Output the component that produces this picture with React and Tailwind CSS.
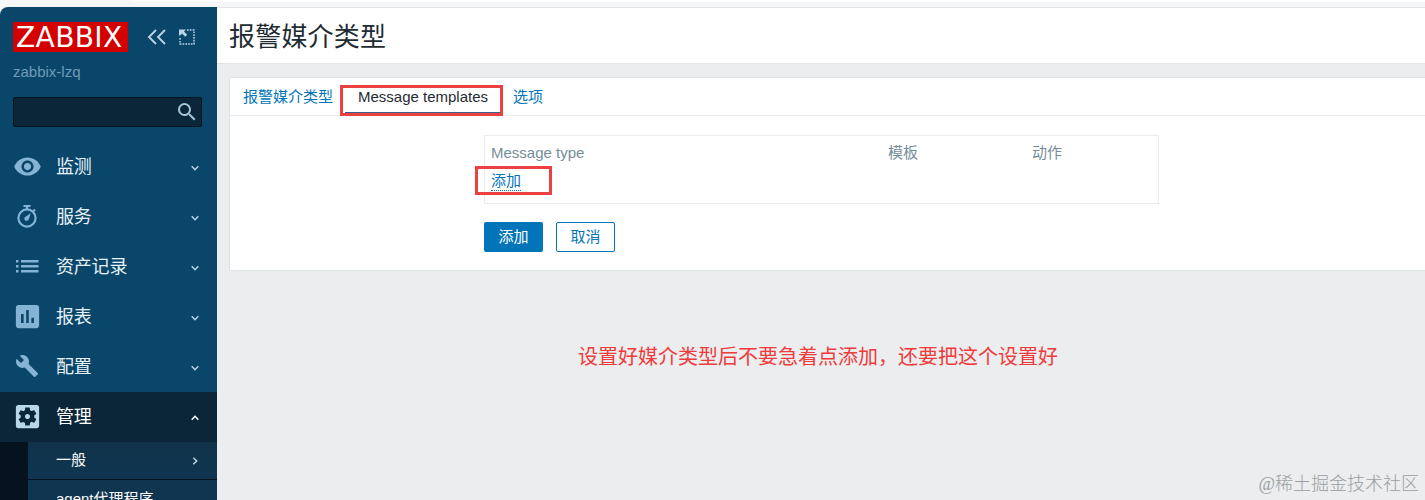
import {
  MdBuild,
  MdInsertChart,
  MdSearch,
  MdSettingsApplications,
  MdVisibility,
} from "react-icons/md"

function Stopwatch() {
  return (
    <svg viewBox="0 0 28 28" className="size-7" fill="none" stroke="currentColor">
      <circle cx="14" cy="16" r="8.6" strokeWidth="2.2" />
      <path d="M10.5 4h7" strokeWidth="2.2" />
      <path d="M14 4v4M20 9.5l2-2" strokeWidth="2.2" />
      <path d="M17.8 11.2l-2 6a2.3 2.3 0 1 1-3-2.8z" fill="currentColor" stroke="none" />
    </svg>
  )
}

function ListLines() {
  return (
    <svg viewBox="0 0 28 28" className="size-7" fill="currentColor">
      <path d="M3 8h2.5v2.5H3zM3 13h2.5v2.5H3zM3 18h2.5v2.5H3zM8 8h17.5v2.5H8zM8 13h17.5v2.5H8zM8 18h17.5v2.5H8z" />
    </svg>
  )
}

function Chevron({ className = "" }) {
  return (
    <svg viewBox="0 0 10 10" className={`size-2.5 ${className}`} fill="none" stroke="currentColor" strokeWidth="1.5">
      <path d="M1.7 3.3 5 6.7l3.3-3.4" />
    </svg>
  )
}

const MENU = [
  { label: "监测", icon: <MdVisibility className="size-[29px]" /> },
  { label: "服务", icon: <Stopwatch /> },
  { label: "资产记录", icon: <ListLines /> },
  { label: "报表", icon: <MdInsertChart className="size-[31px]" /> },
  { label: "配置", icon: <MdBuild className="size-6" /> },
  { label: "管理", icon: <MdSettingsApplications className="size-[31px]" />, open: true },
]

function MenuItem({ label, icon, open }) {
  return (
    <li className={`flex h-[50px] items-center pr-[17px] ${open ? "bg-[#0a2638] text-white" : "text-[#e6f1f8]"}`}>
      <span className={`flex w-[54px] shrink-0 items-center justify-center pb-[2px] ${open ? "text-[#b9d7ea]" : "text-[#84b3d3]"}`}>
        {icon}
      </span>
      <span className="ml-0.5 flex-1 text-lg leading-none tracking-[-0.2px]">{label}</span>
      <Chevron className={open ? "mt-0.5 rotate-180 text-white" : "mt-0.5 text-[#b9d4e6]"} />
    </li>
  )
}

function Sidebar() {
  return (
    <aside className="w-[217px] shrink-0 overflow-hidden rounded-tl-lg bg-[#0a466a]">
      <div className="flex h-[45px] items-end pl-[13px]">
        <div className="flex h-[30px] w-[115px] items-center bg-[#d40000] pt-0.5 pl-[3px] font-['DejaVu_Sans'] text-[28px] leading-none tracking-[0.4px] text-white">
          ZABBIX
        </div>
        <svg viewBox="0 0 20 18" className="mb-1.5 ml-[19px] h-[18px] w-5 text-[#b9d4e6]" fill="none" stroke="currentColor" strokeWidth="1.9">
          <path d="M9 2 2 9l7 7M18 2l-7 7 7 7" />
        </svg>
        <svg viewBox="0 0 18 18" className="mb-1.5 ml-[11px] size-[18px] text-[#b9d4e6]" fill="none" stroke="currentColor">
          <path d="M9 2h7v14H2V9" strokeWidth="1.5" strokeDasharray="1.7 1.1" />
          <path d="M1 1.5h7L6 3.5l3.2 3.2-2 2L4 5.5l-2 2H1z" fill="currentColor" stroke="none" />
        </svg>
      </div>
      <div className="mt-3 pl-[13px] text-[15px] leading-4 text-[#719bb6]">zabbix-lzq</div>
      <div className="mx-[13px] mt-[17px] mr-[15px] flex h-[30px] items-center justify-end rounded-xs border border-[#04131d] bg-[#0a2638] pr-[2px]">
        <MdSearch className="size-6 text-[#a5c3d7]" />
      </div>
      <ul className="mt-[15px]">
        {MENU.map((item) => (
          <MenuItem key={item.label} {...item} />
        ))}
      </ul>
      <div className="bg-[#04131d] pl-7 text-[15px] text-white">
        <div className="flex h-[38px] items-center border-b border-[#04131d] bg-linear-to-b from-[#10334a] to-[#0f3550] pr-[17px] pl-7">
          <span className="flex-1">一般</span>
          <Chevron className="-rotate-90 text-[#b9d4e6]" />
        </div>
        <div className="flex h-[38px] items-center bg-[#0f3550] pl-7">agent代理程序</div>
      </div>
    </aside>
  )
}

function Tabs() {
  return (
    <nav className="flex h-[38px] items-center border-b border-[#ebeef0] pl-[13px] leading-none text-[#0275b8]">
      <span className="w-[102px]">报警媒介类型</span>
      <span className="relative flex h-full w-[156px] items-center justify-center text-[#1f2c33]">
        Message templates
        <span className="absolute inset-x-0 bottom-px h-0.5 bg-[#34608c]" />
        <span className="absolute top-[7px] -left-[5px] h-[31px] w-[163px] border-3 border-[#ed4040]" />
      </span>
      <span className="ml-3">选项</span>
    </nav>
  )
}

function TemplateForm() {
  return (
    <div className="pt-[19px] pl-[254px]">
      <div className="h-[69px] w-[675px] border border-[#e9edef] px-1.5 pt-[9px]">
        <div className="flex leading-4 text-[#768d99]">
          <span className="w-[397px]">Message type</span>
          <span className="w-36">模板</span>
          <span>动作</span>
        </div>
        <div className="relative mt-3 w-fit">
          <a className="block h-[18px] border-b border-dotted border-[#0275b8] leading-4 text-[#0275b8]">添加</a>
          <span className="absolute -top-[7px] -left-4 h-[29px] w-[77px] border-3 border-[#ed4040]" />
        </div>
      </div>
      <div className="mt-[18px] flex gap-[13px] leading-none">
        <button className="h-[30px] w-[59px] rounded-xs bg-[#0275b8] pb-0.5 text-white">添加</button>
        <button className="h-[30px] w-[59px] rounded-xs border border-[#0275b8] pb-0.5 text-[#0275b8]">取消</button>
      </div>
    </div>
  )
}

export default function App() {
  return (
    <div className="flex h-[500px] flex-col overflow-hidden bg-[#f5f6f7] font-['Liberation_Sans','Noto_Sans_CJK_SC',sans-serif] text-[15px]">
      <div className="h-[7px] shrink-0 pl-[132px]">
        <div className="h-0.5 bg-white" />
      </div>
      <div className="flex min-h-0 flex-1">
        <Sidebar />
        <main className="flex min-w-0 flex-1 flex-col bg-[#ebedef]">
          <header className="flex h-[57px] shrink-0 items-center border-t border-b border-t-[#e4e6e8] border-b-[#dfe4e7] bg-white pt-0.5 pl-3">
            <h1 className="text-[26px] leading-none tracking-[0.2px] text-[#1f2c33]">报警媒介类型</h1>
          </header>
          <section className="mt-[13px] ml-3 h-[194px] shrink-0 border border-r-0 border-[#dfe4e7] bg-white">
            <Tabs />
            <TemplateForm />
          </section>
          <p className="mt-[74px] ml-[361px] text-xl leading-6 text-[#ee3b3b]">
            设置好媒介类型后不要急着点添加，还要把这个设置好
          </p>
          <p className="mt-auto mr-1.5 mb-1.5 self-end font-['Liberation_Serif','Noto_Sans_CJK_SC',serif] text-lg leading-5 font-light text-[#9c9fa1]">
            @稀土掘金技术社区
          </p>
        </main>
      </div>
    </div>
  )
}
